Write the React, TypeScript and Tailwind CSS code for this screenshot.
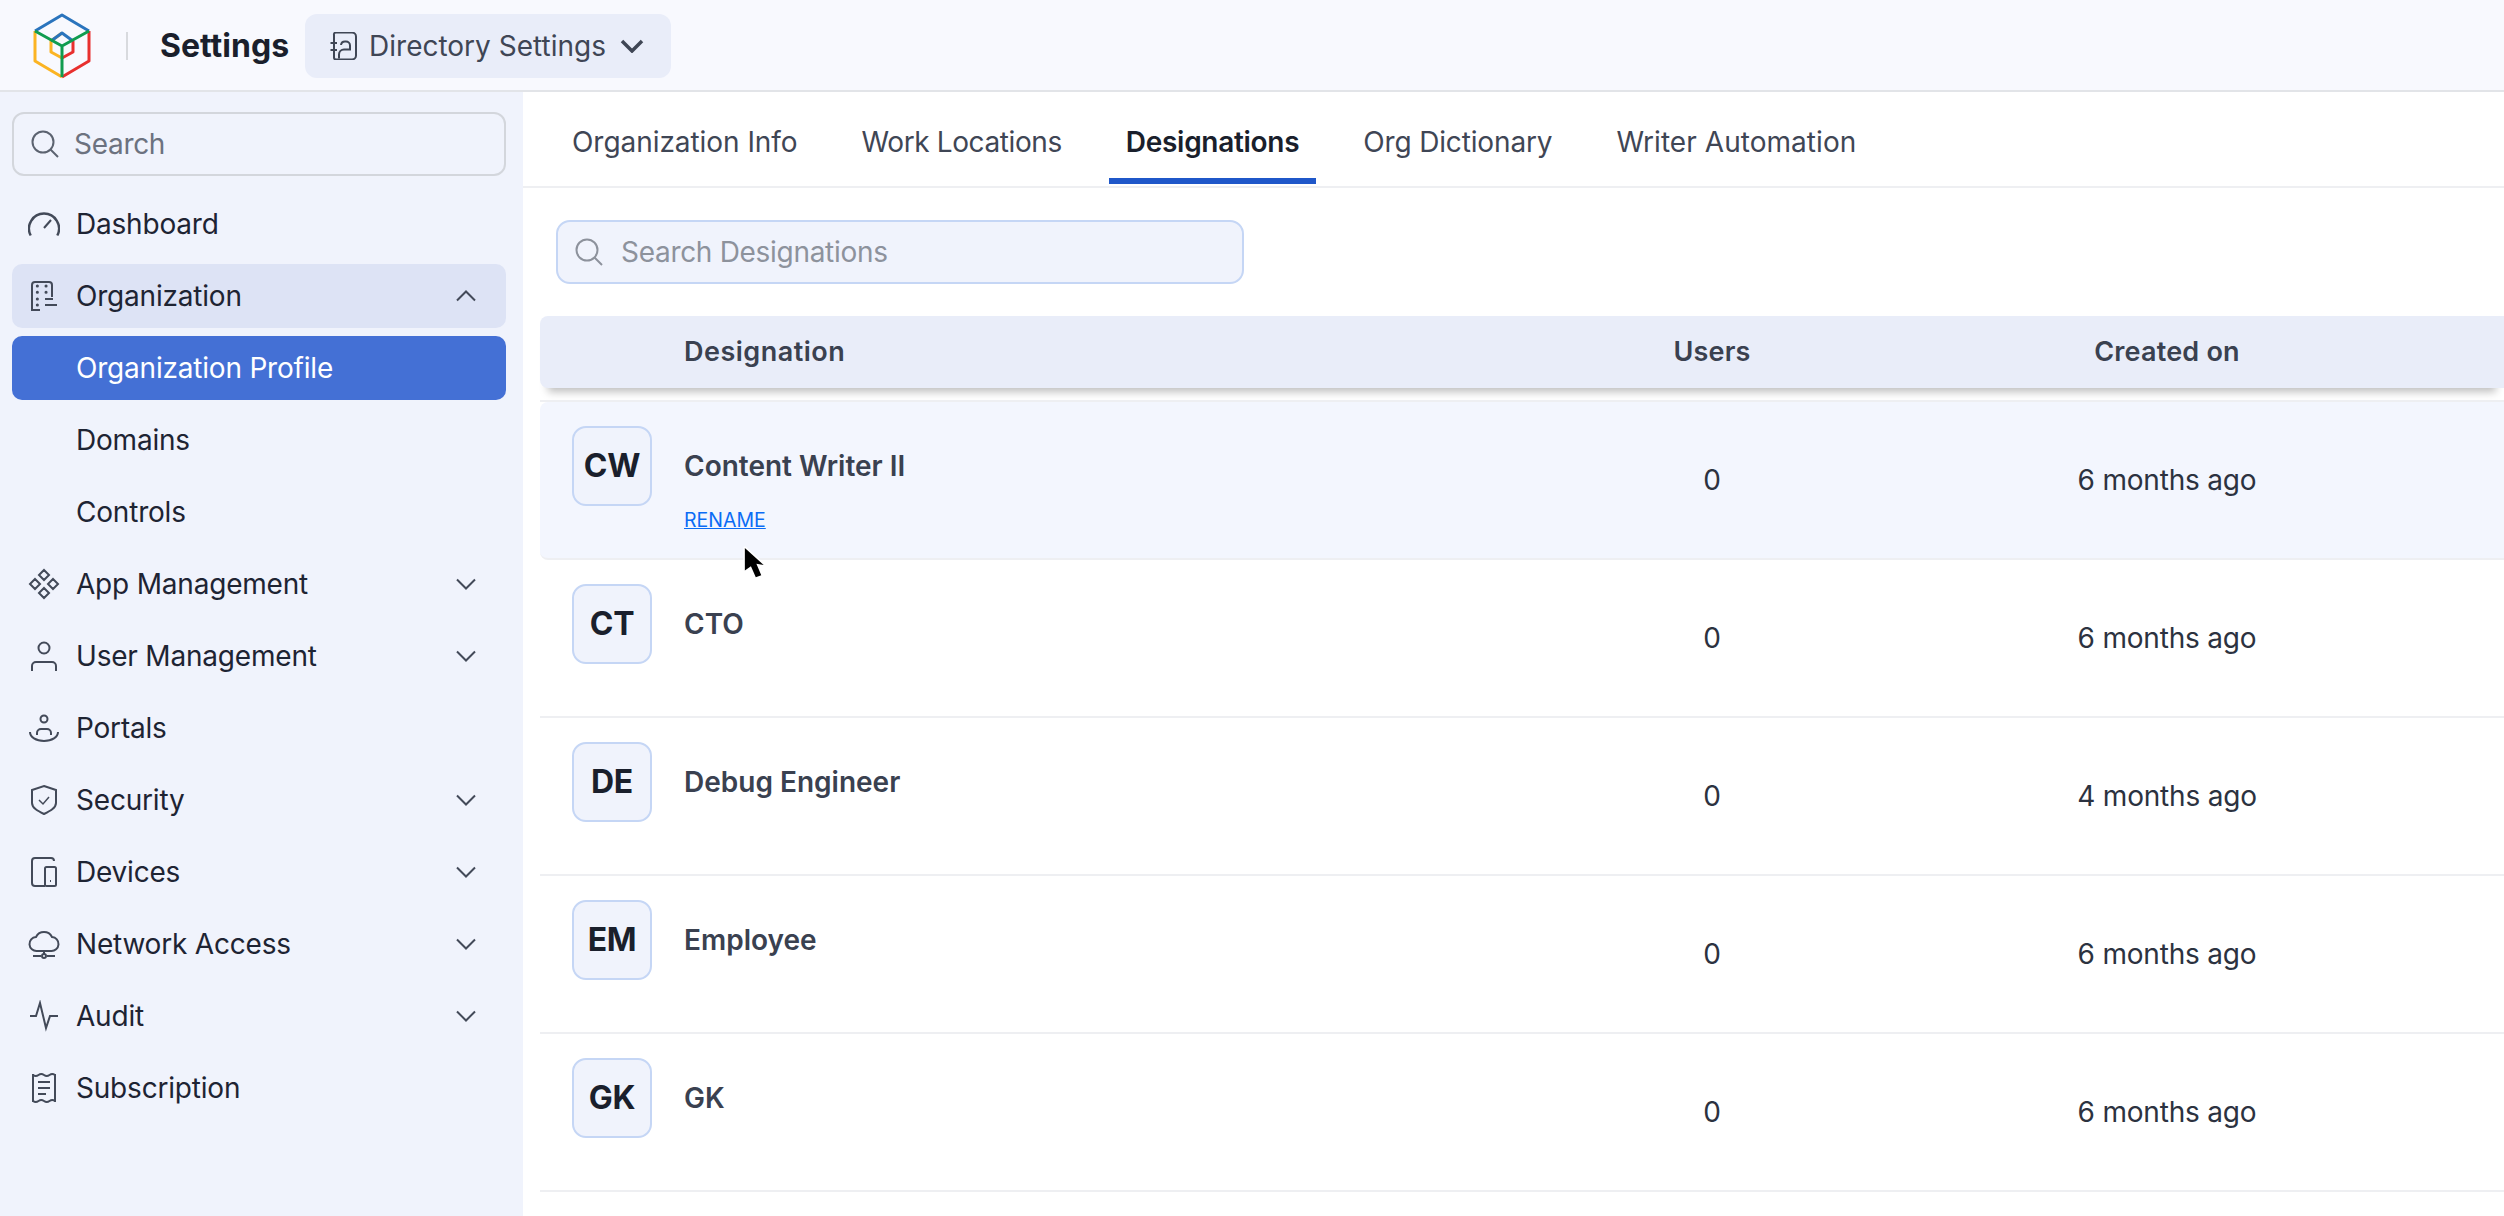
import type { ReactNode } from "react";

function Icon({ children }: { children: ReactNode }) {
  return (
    <svg width="32" height="32" viewBox="0 0 32 32" fill="none" stroke="currentColor" strokeWidth="2" className="shrink-0 text-[#434a59]">
      {children}
    </svg>
  );
}

function Chevron({ up = false }: { up?: boolean }) {
  return (
    <svg width="20" height="12" viewBox="0 0 20 12" fill="none" stroke="currentColor" strokeWidth="2" className="text-[#434a59]">
      <path d={up ? "M1 10.5 10 1.5l9 9" : "M1 1.5l9 9 9-9"} />
    </svg>
  );
}

function SearchIcon() {
  return (
    <svg width="28" height="28" viewBox="0 0 28 28" fill="none" stroke="currentColor" strokeWidth="2" className="shrink-0">
      <circle cx="12" cy="12" r="10.5" />
      <path d="M19.5 19.5 27 27" />
    </svg>
  );
}

function Logo() {
  return (
    <svg width="62" height="68" viewBox="31 12 62 68" fill="none" strokeWidth="3" strokeLinejoin="round" className="shrink-0">
      <path d="M62 33 51 41v11l11 6" stroke="#fbb423" />
      <path d="M62 58l11-6V41" stroke="#e8302e" />
      <path d="M51 41l11-8 11 8" stroke="#2a74bd" />
      <path d="M35 31v30l27 16" stroke="#fbb423" />
      <path d="M62 77l27-16V31" stroke="#e8302e" />
      <path d="M35 31 62 15l27 16" stroke="#2a74bd" />
      <path d="M35 31l27 15 27-15M62 46v31" stroke="#109c4f" />
    </svg>
  );
}

const navIcons: Record<string, ReactNode> = {
  Dashboard: (
    <Icon>
      <path d="M2.700 27.500A15 15 0 1 1 29.300 27.500" strokeWidth="2.400" />
      <path d="M16 20l7-8" />
    </Icon>
  ),
  Organization: (
    <Icon>
      <path d="M12 30H4V5a3 3 0 0 1 3-3h14a3 3 0 0 1 3 3v12" />
      <path d="M17 19h8M17 25h12" />
      <path d="M9.300 6h.1M18 6h.1M9.300 12.300h.1M18 12.300h.1M9.300 19h.1M9.300 25h.1" strokeWidth="3" strokeLinecap="round" />
    </Icon>
  ),
  "App Management": (
    <Icon>
      <path d="M16 2l5 5-5 5-5-5zM16 20l5 5-5 5-5-5zM7 11l5 5-5 5-5-5zM25 11l5 5-5 5-5-5z" />
    </Icon>
  ),
  "User Management": (
    <Icon>
      <circle cx="16" cy="8" r="5.500" />
      <path d="M4 31v-5a4 4 0 0 1 4-4h16a4 4 0 0 1 4 4v5" />
    </Icon>
  ),
  Portals: (
    <Icon>
      <circle cx="16" cy="7" r="3.500" />
      <path d="M9 23v-2a4 4 0 0 1 4-4h6a4 4 0 0 1 4 4v2" />
      <path d="M2 20c0 5 6 9 14 9s14-4 14-9" />
    </Icon>
  ),
  Security: (
    <Icon>
      <path d="M16 2l12 4v13c0 5-6 8-12 11-6-3-12-6-12-11V6z" />
      <path d="M11 16l4 4 6-7" strokeWidth="1.500" />
    </Icon>
  ),
  Devices: (
    <Icon>
      <path d="M17 30H7a3 3 0 0 1-3-3V5a3 3 0 0 1 3-3h16a3 3 0 0 1 3 3" />
      <rect x="17" y="11" width="11" height="19" rx="1.500" />
      <path d="M22 25h1" />
    </Icon>
  ),
  "Network Access": (
    <Icon>
      <path d="M9 23a7 7 0 0 1-1-14 9 9 0 0 1 16 0 7 7 0 0 1-1 14z" />
      <path d="M16 23v4M5 28h8M19 28h8" />
      <circle cx="16" cy="28" r="2" />
    </Icon>
  ),
  Audit: (
    <Icon>
      <path d="M2 16h6l4-13 6 25 4-12h8" />
    </Icon>
  ),
  Subscription: (
    <Icon>
      <path d="M5 2v28M27 2v28M5 3q2.750 2 5.500 0t5.500 0 5.500 0 5.500 0M5 29q2.750 2 5.500 0t5.500 0 5.500 0 5.500 0" />
      <path d="M10 10h12M10 16h12M10 22h8" />
    </Icon>
  ),
};

const navItems = [
  { label: "Dashboard" },
  { label: "Organization", open: true },
  { label: "Organization Profile", sub: true, active: true },
  { label: "Domains", sub: true },
  { label: "Controls", sub: true },
  { label: "App Management", more: true },
  { label: "User Management", more: true },
  { label: "Portals" },
  { label: "Security", more: true },
  { label: "Devices", more: true },
  { label: "Network Access", more: true },
  { label: "Audit", more: true },
  { label: "Subscription" },
];

const tabs = [
  { label: "Organization Info", cls: "tracking-[-0.05px]" },
  { label: "Work Locations", cls: "tracking-[-0.4px]" },
  { label: "Designations", cls: "tracking-[-0.3px]" },
  { label: "Org Dictionary", cls: "tracking-[-0.15px]" },
  { label: "Writer Automation", cls: "tracking-[0.05px]" },
];

const rows = [
  { short: "CW", name: "Content Writer II", when: "6 months ago", hover: true },
  { short: "CT", name: "CTO", when: "6 months ago" },
  { short: "DE", name: "Debug Engineer", when: "4 months ago" },
  { short: "EM", name: "Employee", when: "6 months ago" },
  { short: "GK", name: "GK", when: "6 months ago" },
];

export default function App() {
  return (
    <div className="relative flex h-[1216px] w-[2504px] flex-col overflow-hidden bg-white font-[Inter,sans-serif] text-[#1e2433]">
      {/* top bar */}
      <header className="flex h-[92px] shrink-0 items-center border-b-2 border-[#e2e4e8] bg-[#f8f9fe] pt-[2px] pl-[31px]">
        <Logo />
        <div className="ml-[33px] h-[28px] w-[2px] bg-[#d8dade]" />
        <div className="ml-[32px] text-[32px] font-bold text-[#1a1f2c]">Settings</div>
        <div className="ml-[16px] flex h-[64px] w-[366px] items-center rounded-[12px] bg-[#e9edf9] pl-[25px] text-[#3f4655]">
          <svg width="28" height="28" viewBox="0 0 28 28" fill="none" stroke="currentColor" strokeWidth="2" className="shrink-0">
            <path d="M4 6V3a2 2 0 0 1 2-2.500h16a4 4 0 0 1 4 4v19a4 4 0 0 1-4 4H6a2 2 0 0 1-2-2V6" />
            <path d="M0.500 11h6.500M0.500 18h6.500" />
            <path d="M11 13a4 4 0 0 1 4-3.500h1a4 4 0 0 1 4 4v4h-6a5 5 0 0 0-5 5v4" />
          </svg>
          <span className="ml-[11px] text-[28px]">Directory Settings</span>
          <svg width="24" height="14" viewBox="0 0 24 14" fill="none" stroke="currentColor" strokeWidth="3.500" className="ml-[14px]">
            <path d="M2 2l10 10L22 2" />
          </svg>
        </div>
      </header>

      <div className="flex min-h-0 flex-1">
        {/* sidebar */}
        <aside className="flex w-[523px] shrink-0 flex-col bg-[#f0f3fc] pl-[12px] pr-[17px] pt-[20px]">
          <div className="flex h-[64px] items-center rounded-[12px] border-2 border-[#d3d6dc] pl-[17px] text-[#5c6370]">
            <SearchIcon />
            <span className="ml-[15px] text-[28px] tracking-[-0.3px] text-[#6c727f]">Search</span>
          </div>
          <nav className="mt-[16px] flex flex-col gap-[8px]">
            {navItems.map((item) => (
              <div
                key={item.label}
                className={
                  "flex h-[64px] items-center rounded-[10px] pr-[30px] text-[28px] tracking-[-0.2px] " +
                  (item.active ? "bg-[#4470d5] text-white " : item.open ? "bg-[#dde3f5] " : "") +
                  (item.sub ? "pl-[64px]" : "pl-[16px]")
                }
              >
                {!item.sub && navIcons[item.label]}
                <span className={item.sub ? "" : "ml-[16px]"}>{item.label}</span>
                {(item.more || item.open) && (
                  <span className="ml-auto flex">
                    <Chevron up={item.open} />
                  </span>
                )}
              </div>
            ))}
          </nav>
        </aside>

        {/* main */}
        <main className="min-w-0 flex-1">
          <div className="flex h-[96px] gap-[30px] border-b-2 border-[#eeeff2] pl-[32px]">
            {tabs.map((t) => (
              <div
                key={t.label}
                className={
                  "flex h-[92px] items-center border-b-[6px] px-[17px] pt-[14px] text-[28px] " +
                  t.cls +
                  (t.label === "Designations" ? " border-[#1f57c9] font-semibold text-[#1a1f2c]" : " border-transparent text-[#3f4655]")
                }
              >
                {t.label}
              </div>
            ))}
          </div>

          <div className="ml-[33px] mt-[32px] flex h-[64px] w-[688px] items-center rounded-[14px] border-2 border-[#c5d6f5] bg-[#f0f3fc] pl-[17px] text-[#8d929c]">
            <SearchIcon />
            <span className="ml-[18px] text-[28px] tracking-[-0.3px] text-[#8d929c]">Search Designations</span>
          </div>

          <div className="ml-[17px] mt-[32px]">
            <div className="grid h-[72px] grid-cols-[144px_888px_280px_630px] items-center rounded-l-[8px] bg-[#e9edf9] text-[27px] font-semibold tracking-[0.2px] text-[#3a4150] shadow-[0_12px_8px_-8px_rgba(0,0,0,0.25)]">
              <div />
              <div className="tracking-[0.5px]">Designation</div>
              <div className="text-center">Users</div>
              <div className="text-center">Created on</div>
            </div>
            <div className="mt-[12px] border-t-2 border-[#eeeff2]">
              {rows.map((r) => (
                <div
                  key={r.short}
                  className={
                    "grid h-[158px] grid-cols-[144px_888px_280px_630px] items-center border-b-2 border-[#eeeff2] text-[28px] " +
                    (r.hover ? "rounded-l-[8px] bg-[#f3f6fe]" : "")
                  }
                >
                  <div className="flex h-full items-start pl-[32px] pt-[24px]">
                    <div className="flex h-[80px] w-[80px] items-center justify-center rounded-[14px] border-2 border-[#c5d6f5] bg-[#f0f3fc] text-[32px] font-bold tracking-[-0.3px] text-[#1a1f2c]">
                      {r.short}
                    </div>
                  </div>
                  <div className="flex h-full flex-col items-start pt-[24px]">
                    <div className="flex h-[80px] items-center text-[28px] font-semibold text-[#3a4150]">{r.name}</div>
                    {r.hover && (
                      <a className="text-[19.5px] text-[#0b6cf5] underline">RENAME</a>
                    )}
                  </div>
                  <div className="text-center text-[#2c3240]">0</div>
                  <div className="text-center tracking-[-0.2px] text-[#2c3240]">{r.when}</div>
                </div>
              ))}
            </div>
          </div>
        </main>
      </div>

      {/* mouse pointer */}
      <svg width="34" height="44" viewBox="0 0 28 36" className="absolute left-[740px] top-[543px]">
        <path d="M4 4v18.500l5-3.500 4 9 4.500-1.500-4-9.500 6 1z" fill="#000" stroke="#fff" strokeWidth="2.500" strokeLinejoin="round" paintOrder="stroke" />
      </svg>
    </div>
  );
}
